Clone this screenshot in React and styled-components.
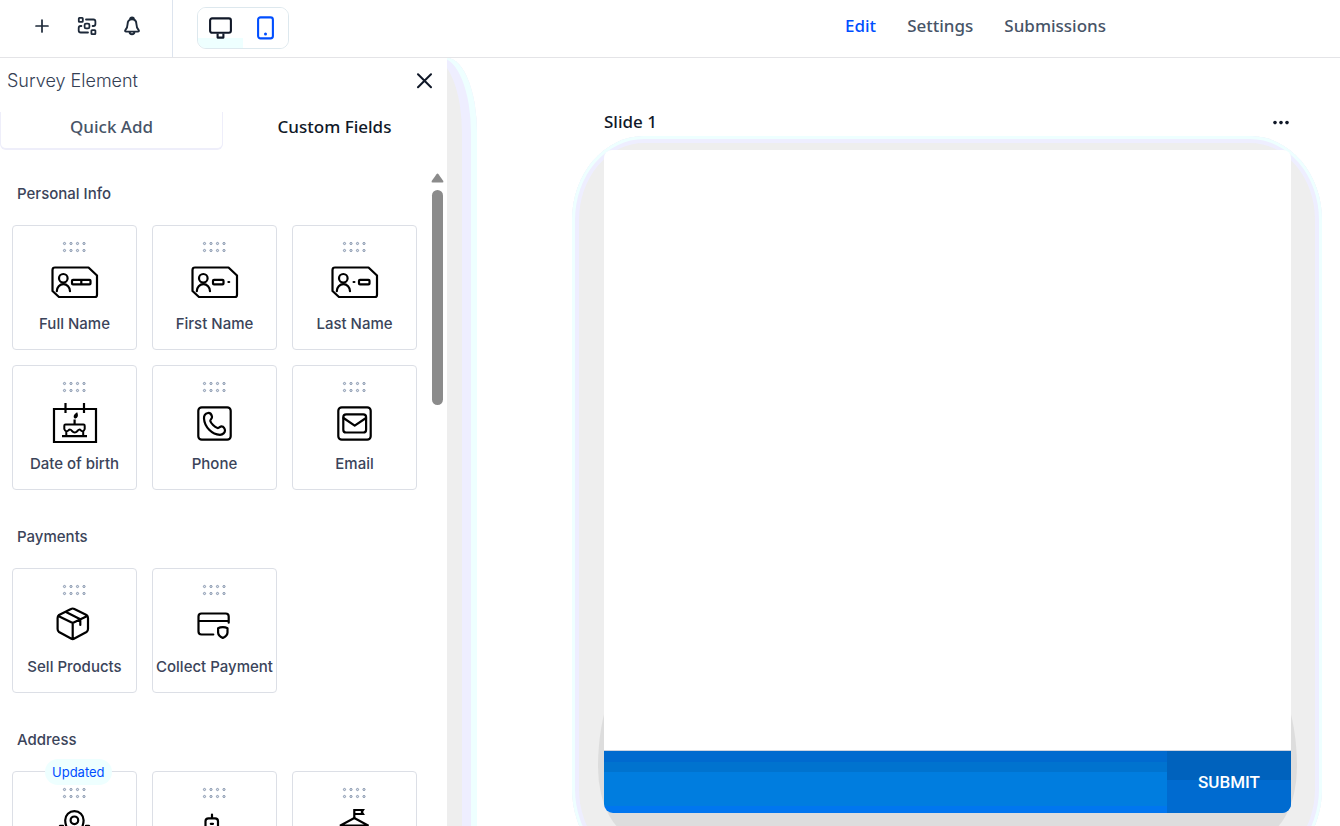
import React from "react";
import styled, { createGlobalStyle } from "styled-components";

const GlobalStyle = createGlobalStyle`
  * { box-sizing: border-box; }
  body { margin: 0; background: #fff; font-family: Inter, "Liberation Sans", sans-serif; color: #3b445a; }
  button { font: inherit; color: inherit; background: none; border: 0; padding: 0; cursor: pointer; }
  a { text-decoration: none; }
  h1, h2, p { margin: 0; }
  svg { display: block; }
`;

const Page = styled.div`
  display: flex;
  flex-direction: column;
  height: 100vh;
  overflow: hidden;
`;

const Header = styled.header`
  display: flex;
  flex: none;
  height: 58px;
  border-bottom: 1px solid #e4e4e7;
`;

const Tools = styled.div`
  display: flex;
  align-items: center;
  gap: 21px;
  width: 173px;
  padding: 0 0 5px 30px;
  border-right: 1px solid #dde4ee;
  color: #1d2939;
`;

const ToolButton = styled.button`
  display: grid;
  place-items: center;
  width: 24px;
  height: 24px;
`;

const Devices = styled.div`
  display: flex;
  align-self: flex-start;
  width: 92px;
  height: 42px;
  margin: 7px 0 0 24px;
  border: 1px solid #dde8ee;
  border-radius: 9px;
  overflow: hidden;
`;

const DeviceButton = styled.button`
  display: grid;
  flex: 1;
  place-items: center;
  color: ${(p) => (p.$active ? "#004eff" : "#101828")};
  background: ${(p) => (p.$active ? "#fff" : "linear-gradient(#fff 75%, #eeffff 75%)")};
`;

const Nav = styled.nav`
  display: flex;
  flex: 1;
  justify-content: flex-end;
  gap: 31px;
  padding: 13px 234px 0 0;
`;

const NavLink = styled.a`
  font: 500 17px/26px "Noto Sans", sans-serif;
  color: ${(p) => (p.$active ? "#004eff" : "#475467")};
`;

const Body = styled.div`
  display: flex;
  flex: 1;
  min-height: 0;
`;

const Sidebar = styled.aside`
  position: relative;
  display: flex;
  flex-direction: column;
  flex: none;
  width: 447px;
  &::after {
    content: "";
    position: absolute;
    inset: 0 -30px 0 auto;
    width: 30px;
    background: #eee;
    border-radius: 0 30px 0 0 / 0 75px 0 0;
    box-shadow: inset -6px 0 #eeffff, inset -15px 0 #eeeeff;
  }
`;

const PanelHead = styled.div`
  display: flex;
  align-items: center;
  justify-content: space-between;
  height: 46px;
  padding: 0 14px 0 7px;
`;

const PanelTitle = styled.h1`
  font-size: 18px;
  font-weight: 300;
  line-height: 24px;
  color: #344054;
`;

const CloseButton = styled.button`
  color: #101828;
`;

const Tabs = styled.div`
  display: flex;
  height: 46px;
  padding-top: 8px;
`;

const Tab = styled.button`
  width: 223px;
  height: 38px;
  padding-bottom: 6px;
  font: 500 17px/26px "Noto Sans", sans-serif;
  color: ${(p) => (p.$active ? "#101828" : "#475467")};
  border: solid ${(p) => (p.$active ? "transparent" : "#eeeefa")};
  border-width: 0 1px 2px;
  border-radius: 0 0 6px 6px;
`;

const Scroller = styled.div`
  display: flex;
  flex: 1;
  min-height: 0;
  overflow: hidden;
`;

const Groups = styled.div`
  display: flex;
  flex: 1;
  flex-direction: column;
  gap: 37px;
  padding: 34px 0 0 12px;
`;

const GroupTitle = styled.h2`
  margin: 0 0 21px;
  padding-left: 5px;
  font-size: 15px;
  font-weight: 500;
  line-height: 20px;
`;

const Grid = styled.div`
  display: grid;
  grid-template-columns: repeat(3, 125px);
  gap: 15px;
`;

const FieldCard = styled.button`
  position: relative;
  display: flex;
  flex-direction: column;
  align-items: center;
  height: 125px;
  padding-top: 15px;
  border: 1px solid #dcdfe6;
  border-radius: 4px;
  font-size: 15px;
  font-weight: 500;
  line-height: 20px;
  white-space: nowrap;
`;

const FieldIcon = styled.svg`
  flex: none;
  width: 49px;
  height: 44px;
  margin: 8px 0 9px;
  fill: none;
  stroke: #000;
  stroke-width: 2.2;
  stroke-linejoin: round;
  stroke-linecap: round;
`;

const Badge = styled.span`
  position: absolute;
  top: -13px;
  left: 32px;
  padding: 3px 7px;
  border-radius: 13px;
  background: #eeffff;
  color: #004eff;
  font-size: 13px;
  font-weight: 400;
`;

const Scrollbar = styled.div`
  display: flex;
  flex-direction: column;
  align-items: center;
  gap: 7px;
  width: 19px;
  padding-top: 23px;
`;

const Thumb = styled.div`
  width: 11px;
  height: 215px;
  border-radius: 6px;
  background: #8b8b8b;
`;

const Canvas = styled.main`
  display: flex;
  flex: 1;
  flex-direction: column;
  padding: 50px 49px 0 157px;
`;

const SlideHead = styled.div`
  display: flex;
  align-items: center;
  justify-content: space-between;
  height: 28px;
  margin-bottom: 14px;
  color: #101828;
`;

const SlideTitle = styled.h2`
  font: 500 17px/26px "Noto Sans", sans-serif;
`;

const Slide = styled.section`
  position: relative;
  z-index: 0;
  &::before {
    content: "";
    position: absolute;
    z-index: -2;
    inset: -14px -31px -60px -32px;
    border-radius: 72px / 84px;
    background: #eee;
    box-shadow: inset 0 0 0 3px #eeffff, inset 0 0 0 7px #eeeeff;
  }
  &::after {
    content: "";
    position: absolute;
    z-index: -1;
    inset: auto -6px -24px -6px;
    height: 170px;
    border-radius: 40px / 100px 100px 70px 70px;
    background: #ddd;
  }
`;

const SlideBody = styled.div`
  height: 601px;
  background: #fff;
  border-bottom: 1px solid #ccd3e0;
  border-radius: 8px 8px 0 0;
`;

const SlideFooter = styled.footer`
  display: flex;
  justify-content: flex-end;
  height: 62px;
  border-radius: 0 0 9px 9px;
  overflow: hidden;
  background: linear-gradient(#006acf 11px, #0073cf 11px 21px, #007ddf 21px 55px, #0076ef 55px);
`;

const Submit = styled.button`
  width: 124px;
  background: linear-gradient(#0062bd 29px, #006bd0 29px);
  color: #fff;
  font: 500 17px/24px Roboto, sans-serif;
`;

const Grip = () => (
  <svg width="25" height="12" viewBox="0 0 25 12" fill="#dfe5ee" stroke="#8796ad" strokeWidth="1">
    {[2.5, 9, 15.5, 22].map((x) =>
      [2.5, 9.5].map((y) => <circle key={`${x}-${y}`} cx={x} cy={y} r="1.1" />)
    )}
  </svg>
);

const idCard = (
  <>
    <path d="M5 6.5H38.5L47 14.5V34Q47 36 45 36H9L2.5 30V9Q2.5 6.5 5 6.5Z" />
    <circle cx="13.3" cy="17.3" r="4.3" />
    <path d="M6.8 30.2a6.6 7 0 0 1 13.2 0" />
  </>
);

const icons = {
  full: (
    <>
      {idCard}
      <rect x="22" y="18.8" width="18.5" height="4.6" rx="1" />
      <path d="M31.3 19v4" />
    </>
  ),
  first: (
    <>
      {idCard}
      <rect x="23" y="18.8" width="10.5" height="4.6" rx="1" />
      <path d="M38.4 21h.8" />
    </>
  ),
  last: (
    <>
      {idCard}
      <path d="M23.6 21h.8" />
      <rect x="29" y="18.8" width="10.5" height="4.6" rx="1" />
    </>
  ),
  birth: (
    <g strokeLinejoin="miter" strokeLinecap="butt">
      <path d="M4 8H46V41H4Z" />
      <path d="M15.5 2v10M34 2v10M12 35.2h25M24.6 18.5v5" />
      <path d="M16.3 35V30M33.2 35V30M14.3 28V24.8Q14.3 23.6 15.5 23.6H33.5Q34.7 23.6 34.7 24.8V28Q33.5 31.5 31 29.5Q29 27.5 27.5 30Q24.7 33 22 30Q20.3 27.5 18.3 29.5Q15.5 31.5 14.3 28Z" strokeWidth="2" />
      <path d="M26.8 12.5Q28 16 25.2 16.8Q23 15.5 26.8 12.5Z" fill="#000" strokeWidth="1.6" />
    </g>
  ),
  phone: (
    <>
      <rect x="8.3" y="6.3" width="32.4" height="32.4" rx="3.5" />
      <path d="M18 12C15.5 12.5 13.8 14.5 14 17.5C14.5 26 22 33.5 30 33.8C33 33.8 35 31.5 35 29.5C35 28 33.5 25.5 31.8 25.3C30 25 29.3 27.5 27.5 27C24.5 26 21 22.5 20.3 20C20 18.5 22.5 17.5 22 15.5C21.5 13.5 20 11.8 18 12Z" />
    </>
  ),
  email: (
    <>
      <rect x="8.3" y="6.3" width="32.4" height="32.4" rx="3.5" />
      <rect x="13.3" y="13.3" width="22.8" height="18.2" rx="2.8" />
      <path d="M13.5 17L24.7 24.6L36 17" />
    </>
  ),
  box: (
    <path d="M21 5Q22.7 4 24.4 5L36.5 11Q38 12 38 14V25Q38 27 36.5 28L24.4 34.5Q22.7 35.6 21 34.5L9 28Q7.6 27 7.6 25V14Q7.6 12 9 11ZM8.3 12L22.7 19L37.3 12M22.7 19V35M16 8L30.3 15.2V21" />
  ),
  payment: (
    <>
      <path d="M23.3 30.5H11.5Q8.5 30.5 8.5 27.5V12.5Q8.5 9.5 11.5 9.5H35.7Q38.7 9.5 38.7 12.5V18.7M8.5 17H38.7" />
      <path d="M32.8 23.2Q35.5 23.2 37.5 24.3V28.6Q37.3 32 32.8 34Q28.3 32 28.1 28.6V24.3Q30 23.2 32.8 23.2Z" />
    </>
  ),
  pin: (
    <>
      <path d="M24.4 34C18 25 15.2 19 15.2 13.3a9.2 9.2 0 0 1 18.4 0C33.6 19 30.8 25 24.4 34Z" />
      <circle cx="24.4" cy="13.3" r="3.8" />
      <path d="M13 18.8H10L5 36H44L39 18.8H36" />
    </>
  ),
  tower: (
    <path d="M15.5 36V14.3Q15.5 11.3 18.5 11.3H25Q28 11.3 28 14.3V36M22 7.5V11M20.8 16.8H23" />
  ),
  flag: (
    <g strokeLinejoin="miter">
      <path d="M24.3 11V3H33L31.8 5L33 7H24.3" />
      <path d="M10 18.7L24.3 11L38.5 18.7ZM13 19V36M36 19V36" />
    </g>
  ),
};

const groups = [
  {
    title: "Personal Info",
    fields: [
      { icon: "full", label: "Full Name" },
      { icon: "first", label: "First Name" },
      { icon: "last", label: "Last Name" },
      { icon: "birth", label: "Date of birth" },
      { icon: "phone", label: "Phone" },
      { icon: "email", label: "Email" },
    ],
  },
  {
    title: "Payments",
    fields: [
      { icon: "box", label: "Sell Products" },
      { icon: "payment", label: "Collect Payment" },
    ],
  },
  {
    title: "Address",
    fields: [{ icon: "pin", badge: "Updated" }, { icon: "tower" }, { icon: "flag" }],
  },
];

const Field = ({ label, icon, badge }) => (
  <FieldCard type="button" aria-label={label || icon}>
    {badge && <Badge>{badge}</Badge>}
    <Grip />
    <FieldIcon viewBox="0 0 49 44">{icons[icon]}</FieldIcon>
    {label}
  </FieldCard>
);

export default function App() {
  return (
    <Page>
      <GlobalStyle />
      <Header>
        <Tools>
          <ToolButton aria-label="Add">
            <svg width="14" height="14" viewBox="0 0 14 14" fill="none" stroke="currentColor" strokeWidth="1.7" strokeLinecap="round">
              <path d="M7 1V13M1 7H13" />
            </svg>
          </ToolButton>
          <ToolButton aria-label="Workflow">
            <svg width="20" height="20" viewBox="0 0 20 20" fill="none" stroke="currentColor" strokeWidth="1.8" strokeLinecap="round" strokeLinejoin="round">
              <rect x="1.8" y="1.8" width="4" height="4" rx=".6" />
              <rect x="14.4" y="14.2" width="4" height="4" rx=".6" />
              <rect x="7.6" y="7.6" width="4.8" height="4.8" rx="1.4" />
              <path d="M9 3.5H16.4Q18.4 3.5 18.4 5.5V8Q18.4 10 16.4 10H15.6M11 16.5H3.7Q1.7 16.5 1.7 14.5V12Q1.7 10 3.7 10H4.4" />
            </svg>
          </ToolButton>
          <ToolButton aria-label="Notifications">
            <svg width="18" height="20" viewBox="0 0 18 20" fill="none" stroke="currentColor" strokeWidth="1.9" strokeLinecap="round" strokeLinejoin="round">
              <path d="M7 3.4a2 2 0 0 1 4 0M9 3.2C6 3.2 4.6 5.2 4.6 8C4.6 11.5 3.4 13 2.2 14.4Q1.8 15.6 3 15.6H15Q16.2 15.6 15.8 14.4C14.6 13 13.4 11.5 13.4 8C13.4 5.2 12 3.2 9 3.2ZM6.6 16a2.4 2.2 0 0 0 4.8 0" />
            </svg>
          </ToolButton>
        </Tools>
        <Devices>
          <DeviceButton aria-label="Desktop view">
            <svg width="23" height="22" viewBox="0 0 23 22" fill="none" stroke="currentColor" strokeWidth="2.1" strokeLinejoin="round">
              <rect x="1.1" y="1.4" width="20.8" height="14.4" rx="2" />
              <path d="M8.6 16.5V20.6H14.4V16.5" />
            </svg>
          </DeviceButton>
          <DeviceButton $active aria-label="Mobile view">
            <svg width="17" height="24" viewBox="0 0 17 24" fill="none" stroke="currentColor" strokeWidth="2.1">
              <rect x="1.1" y="1.4" width="14.8" height="21" rx="2.4" />
              <circle cx="8.5" cy="18" r="1.5" fill="currentColor" stroke="none" />
            </svg>
          </DeviceButton>
        </Devices>
        <Nav>
          <NavLink href="#edit" $active>Edit</NavLink>
          <NavLink href="#settings">Settings</NavLink>
          <NavLink href="#submissions">Submissions</NavLink>
        </Nav>
      </Header>
      <Body>
        <Sidebar>
          <PanelHead>
            <PanelTitle>Survey Element</PanelTitle>
            <CloseButton aria-label="Close">
              <svg width="17" height="16" viewBox="0 0 17 16" fill="none" stroke="currentColor" strokeWidth="2" strokeLinecap="round">
                <path d="M2 1.2L15 14.2M15 1.2L2 14.2" />
              </svg>
            </CloseButton>
          </PanelHead>
          <Tabs>
            <Tab type="button">Quick Add</Tab>
            <Tab type="button" $active>Custom Fields</Tab>
          </Tabs>
          <Scroller>
            <Groups>
              {groups.map((group) => (
                <section key={group.title}>
                  <GroupTitle>{group.title}</GroupTitle>
                  <Grid>
                    {group.fields.map((field) => (
                      <Field key={field.icon} {...field} />
                    ))}
                  </Grid>
                </section>
              ))}
            </Groups>
            <Scrollbar aria-hidden="true">
              <svg width="13" height="10" viewBox="0 0 13 10" fill="#8b8b8b">
                <path d="M6.5 0.5Q7 0.5 7.5 1.2L12.3 8Q12.8 9.5 11.5 9.5H1.5Q.2 9.5 .7 8L5.5 1.2Q6 .5 6.5 .5Z" />
              </svg>
              <Thumb />
            </Scrollbar>
          </Scroller>
        </Sidebar>
        <Canvas>
          <SlideHead>
            <SlideTitle>Slide 1</SlideTitle>
            <button type="button" aria-label="Slide options">
              <svg width="20" height="6" viewBox="0 0 20 6" fill="currentColor">
                <circle cx="4" cy="3.6" r="1.8" />
                <circle cx="10" cy="3.6" r="1.8" />
                <circle cx="16" cy="3.6" r="1.8" />
              </svg>
            </button>
          </SlideHead>
          <Slide>
            <SlideBody />
            <SlideFooter>
              <Submit type="button">SUBMIT</Submit>
            </SlideFooter>
          </Slide>
        </Canvas>
      </Body>
    </Page>
  );
}
